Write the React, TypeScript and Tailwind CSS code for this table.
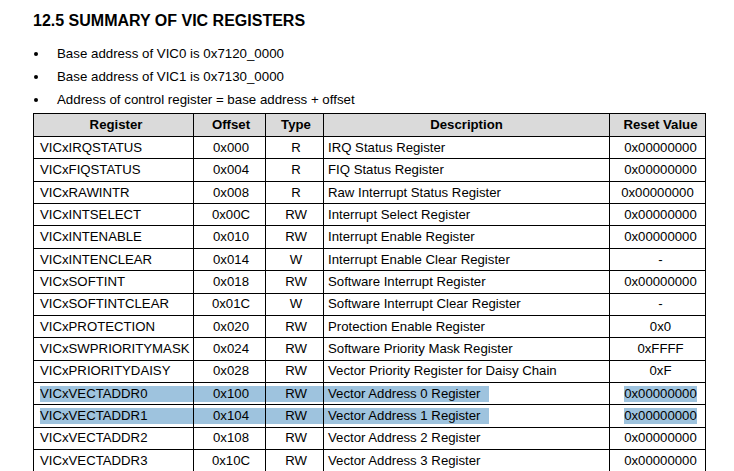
import { FC } from "react";

type Row = {
    name: string;
    offset: string;
    type: string;
    desc: string;
    reset: string;
    selected?: boolean;
};

const rows: Row[] = [
    { name: "VICxIRQSTATUS", offset: "0x000", type: "R", desc: "IRQ Status Register", reset: "0x00000000" },
    { name: "VICxFIQSTATUS", offset: "0x004", type: "R", desc: "FIQ Status Register", reset: "0x00000000" },
    { name: "VICxRAWINTR", offset: "0x008", type: "R", desc: "Raw Interrupt Status Register", reset: "0x00000000" },
    { name: "VICxINTSELECT", offset: "0x00C", type: "RW", desc: "Interrupt Select Register", reset: "0x00000000" },
    { name: "VICxINTENABLE", offset: "0x010", type: "RW", desc: "Interrupt Enable Register", reset: "0x00000000" },
    { name: "VICxINTENCLEAR", offset: "0x014", type: "W", desc: "Interrupt Enable Clear Register", reset: "-" },
    { name: "VICxSOFTINT", offset: "0x018", type: "RW", desc: "Software Interrupt Register", reset: "0x00000000" },
    { name: "VICxSOFTINTCLEAR", offset: "0x01C", type: "W", desc: "Software Interrupt Clear Register", reset: "-" },
    { name: "VICxPROTECTION", offset: "0x020", type: "RW", desc: "Protection Enable Register", reset: "0x0" },
    { name: "VICxSWPRIORITYMASK", offset: "0x024", type: "RW", desc: "Software Priority Mask Register", reset: "0xFFFF" },
    { name: "VICxPRIORITYDAISY", offset: "0x028", type: "RW", desc: "Vector Priority Register for Daisy Chain", reset: "0xF" },
    { name: "VICxVECTADDR0", offset: "0x100", type: "RW", desc: "Vector Address 0 Register", reset: "0x00000000", selected: true },
    { name: "VICxVECTADDR1", offset: "0x104", type: "RW", desc: "Vector Address 1 Register", reset: "0x00000000", selected: true },
    { name: "VICxVECTADDR2", offset: "0x108", type: "RW", desc: "Vector Address 2 Register", reset: "0x00000000" },
    { name: "VICxVECTADDR3", offset: "0x10C", type: "RW", desc: "Vector Address 3 Register", reset: "0x00000000" },
];

const bullets = [
    "Base address of VIC0 is 0x7120_0000",
    "Base address of VIC1 is 0x7130_0000",
    "Address of control register = base address + offset",
];

const cell = "border-r border-b border-black flex items-center h-[22.36px] whitespace-nowrap";
const sel = "bg-[#9ec3de] h-[16px] flex items-center";

const App: FC = () => {
    return (
        <div className="w-[734px] h-[471px] overflow-hidden bg-white text-black font-['Liberation_Sans',Arial,sans-serif]">
            <div className="pl-[33px] pt-[11px]">
                <h1 className="text-[16px] leading-[20px] font-bold">12.5 SUMMARY OF VIC REGISTERS</h1>
                <ul className="mt-[11px] text-[13.3px] leading-[23px]">
                    {bullets.map((b) => (
                        <li key={b} className="flex items-center">
                            <span className="w-[24px] flex">
                                <span className="ml-[1px] w-[4px] h-[4px] rounded-full bg-black"></span>
                            </span>
                            {b}
                        </li>
                    ))}
                </ul>

                {/* register table */}
                <div className="mt-[2px] w-[673px] grid grid-cols-[160px_72px_58px_286px_96px] border-l border-t border-black text-[13.2px]">
                    <div className={`${cell} h-[23px] bg-[#dadada] font-bold justify-center pl-[5px]`}>Register</div>
                    <div className={`${cell} h-[23px] bg-[#dadada] font-bold justify-center pl-[3px]`}>Offset</div>
                    <div className={`${cell} h-[23px] bg-[#dadada] font-bold justify-center pl-[3px]`}>Type</div>
                    <div className={`${cell} h-[23px] bg-[#dadada] font-bold justify-center`}>Description</div>
                    <div className={`${cell} h-[23px] bg-[#dadada] font-bold justify-center pl-[6px]`}>Reset Value</div>

                    {rows.map((r) =>
                        r.selected ? (
                            <div key={r.name} className="contents">
                                <div className={`${cell} pl-[6px]`}>
                                    <div className={`${sel} flex-1`}>{r.name}</div>
                                </div>
                                <div className={cell}>
                                    <div className={`${sel} flex-1 justify-center pl-[3px]`}>{r.offset}</div>
                                </div>
                                <div className={cell}>
                                    <div className={`${sel} flex-1 justify-center pl-[3px]`}>{r.type}</div>
                                </div>
                                <div className={cell}>
                                    <div className={`${sel} w-[165px] pl-[4px]`}>{r.desc}</div>
                                </div>
                                <div className={`${cell} justify-center pl-[6px]`}>
                                    <span className={sel}>{r.reset}</span>
                                </div>
                            </div>
                        ) : (
                            <div key={r.name} className="contents">
                                <div className={`${cell} pl-[6px]`}>{r.name}</div>
                                <div className={`${cell} justify-center pl-[3px]`}>{r.offset}</div>
                                <div className={`${cell} justify-center pl-[3px]`}>{r.type}</div>
                                <div className={`${cell} pl-[4px]`}>{r.desc}</div>
                                <div className={`${cell} justify-center ${r.name === "VICxRAWINTR" ? "" : "pl-[6px]"}`}>{r.reset}</div>
                            </div>
                        )
                    )}
                </div>
            </div>
        </div>
    );
};

export default App;
